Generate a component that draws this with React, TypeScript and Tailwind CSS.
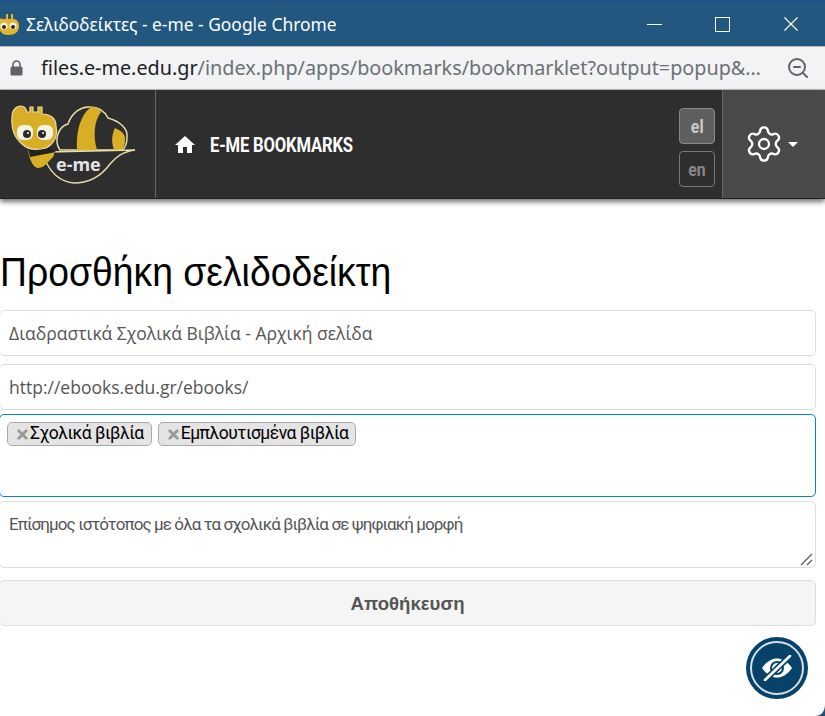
import { Settings, ZoomOut, X } from "lucide-react";

function BeeLogo() {
  return (
    <svg width="155" height="108" viewBox="0 0 155 108" className="block">
      {/* cloud */}
      <path d="M60 60 C54 52 57 37 68 34 C72 22 82 16 90 17 C99 17 105 22 108 28 C119 31 128 38 127 47 C127 53 125 58 122 60 Z" fill="#2e2e2e" stroke="#e8dca8" strokeWidth="1.5" />
      <path d="M77 60 C76 42 80 25 91 17 C96 17 100 19 101 22 C94 31 93 46 97 60 Z" fill="#d9ae25" />
      <path d="M114 60 C111 52 112 44 115 38 C122 41 126 45 125 50 C125 54 124 58 121 60 Z" fill="#d9ae25" />
      {/* leaf */}
      <path d="M48 62 L135 60 C122 62 116 67 110 74 C102 85 91 93 74 93 C62 92 52 84 46 72" fill="#2e2e2e" stroke="#e8dca8" strokeWidth="1.4" />
      {/* body */}
      <path d="M28 60 L52 60 C55 63 55 66 50 70 C46 75 42 78 38 78 C33 78 29 68 28 60 Z" fill="#d9ae25" />
      <path d="M28 58 L50 58 L56 62 L30 67 Z" fill="#222222" />
      {/* head */}
      <path d="M12 27 C12 20 16 16 21 16 C24 16 26 18 27 22 L30 22 L30 17 L33 17 L33 22 L38 22 L38 17 L42 17 L42 24 C50 24 56 28 56 36 C58 46 54 54 46 58 C38 60 28 60 22 54 C15 48 11 38 12 27 Z" fill="#d9ae25" stroke="#e8dca8" strokeWidth="1.2" />
      <rect x="17" y="35" width="16" height="15" rx="6" fill="#f5f2e6" />
      <rect x="37" y="35" width="16" height="15" rx="6" fill="#f5f2e6" />
      <circle cx="27" cy="44" r="4" fill="#2a2a2a" />
      <circle cx="42" cy="44" r="4" fill="#2a2a2a" />
      <circle cx="28" cy="43" r="1" fill="#fff" />
      <circle cx="43" cy="43" r="1" fill="#fff" />
      <text x="56" y="81" fill="#e4e4e4" fontSize="18" fontWeight="700" fontFamily="'Open Sans', sans-serif">e-me</text>
    </svg>
  );
}

function Favicon() {
  return (
    <svg width="19" height="22" viewBox="0 0 19 22">
      <path d="M-2 8 C-2 5 2 5 3 6 L6 6 L6 1 L8 1 L8 6 L11 6 L11 1 L13 1 L13 6 C17 6 19 9 19 13 C19 19 15 22 8 22 C1 22 -2 16 -2 8 Z" fill="#e3b52c" />
      <circle cx="4" cy="13" r="3.6" fill="#f7f3e0" />
      <circle cx="13" cy="13" r="3.6" fill="#f7f3e0" />
      <circle cx="4" cy="14" r="2" fill="#2a2a2a" />
      <circle cx="13" cy="14" r="2" fill="#2a2a2a" />
    </svg>
  );
}

function EyeSlash() {
  return (
    <svg width="32" height="26" viewBox="0 0 32 26">
      <path d="M1 13 C6 6 11 3.5 16 3.5 C21 3.5 26 6 31 13 C26 20 21 22.5 16 22.5 C11 22.5 6 20 1 13 Z" fill="#fff" />
      <circle cx="16" cy="13" r="6" fill="none" stroke="#07426b" strokeWidth="2" />
      <path d="M4 25 L29 1" stroke="#07426b" strokeWidth="6" />
      <path d="M4 25 L29 1" stroke="#fff" strokeWidth="2.6" strokeLinecap="round" />
    </svg>
  );
}

function Tag({ label }: { label: string }) {
  return (
    <span className="flex h-[24px] items-center rounded-[5px] border border-[#aaaaaa] bg-[#e4e4e4] pl-[7px] pr-[7px] text-[17.5px] leading-none tracking-[-0.5px] text-black">
      <X size={15} strokeWidth={4.5} className="text-[#999999]" />
      {label}
    </span>
  );
}

export default function App() {
  const inputClass = "block h-[46px] w-[817px] rounded-[5px] border border-[#dddddd] bg-white px-[9px] font-['Open_Sans',sans-serif] text-[17.5px] text-[#555555] outline-none";

  return (
    <div className="relative flex h-[716px] w-[825px] flex-col overflow-hidden bg-white font-['Roboto',sans-serif]">
      {/* window title bar */}
      <div className="flex h-[46px] shrink-0 items-center border-t-2 border-[#24508a] bg-[#22577f] text-white">
        <div className="flex h-full w-[26px] items-center overflow-hidden">
          <Favicon />
        </div>
        <span className="font-['Noto_Sans',sans-serif] text-[17.4px]">Σελιδοδείκτες - e-me - Google Chrome</span>
        <div className="ml-auto flex items-center">
          <div className="mr-[53px] h-px w-[15px] bg-white" />
          <div className="mr-[51px] h-[15px] w-[15px] border border-white" />
          <X size={20} strokeWidth={1.1} className="mr-[24px] scale-125" />
        </div>
      </div>

      {/* address bar */}
      <div className="flex h-[44px] shrink-0 items-center border-y border-[#b9bbbe] bg-[#f1f3f4] pl-[10px]">
        <svg width="13" height="16" viewBox="0 0 13 16" className="mr-[18px]">
          <path d="M3 7 V4.5 A3.5 3.5 0 0 1 10 4.5 V7" fill="none" stroke="#5f6368" strokeWidth="1.6" />
          <rect x="0.5" y="6.5" width="12" height="9" rx="1.5" fill="#5f6368" />
        </svg>
        <span className="font-['Noto_Sans',sans-serif] text-[19.8px] whitespace-nowrap text-[#202124]">
          files.e-me.edu.gr<span className="text-[#6b7075]">/index.php/apps/bookmarks/bookmarklet?output=popup&amp;…</span>
        </span>
        <ZoomOut size={24} strokeWidth={2} className="ml-auto mr-[15px] text-[#5f6368]" />
      </div>

      {/* nav */}
      <nav className="flex h-[109px] shrink-0 border-b border-[#222222] bg-[#2e2e2e] shadow-[0_3px_5px_rgba(0,0,0,0.55)]">
        <div className="w-[156px] border-r border-[#666666]">
          <BeeLogo />
        </div>
        <div className="flex items-center pl-[19px]">
          <svg width="20" height="18" viewBox="0 0 20 18" className="mr-[15px]">
            <path d="M10 1 L20 10 L17 10 L17 18 L12 18 L12 12 L8 12 L8 18 L3 18 L3 10 L0 10 Z" fill="#fff" />
          </svg>
          <span className="origin-left scale-x-[0.83] whitespace-nowrap pt-[1px] text-[20px] font-bold tracking-[-0.2px] text-white">E-ME BOOKMARKS</span>
        </div>
        <div className="ml-auto mr-[7px] flex flex-col gap-[7px] pt-[18px]">
          <div className="flex h-[36px] w-[36px] items-center justify-center rounded-[4px] border border-[#888888] bg-[#5f5f5f] text-[18px] font-bold text-[#cccccc]">
            <span className="scale-x-[0.88]">el</span>
          </div>
          <div className="flex h-[36px] w-[36px] items-center justify-center rounded-[4px] border border-[#777777] text-[18px] font-bold text-[#888888]">
            <span className="scale-x-[0.88]">en</span>
          </div>
        </div>
        <div className="flex w-[103px] items-center border-l border-[#666666] bg-[#4a4a4a] pl-[21px] text-white">
          <Settings size={40} strokeWidth={1.4} />
          <div className="ml-[4px] h-0 w-0 border-x-[5.5px] border-t-[5.5px] border-x-transparent border-t-white" />
        </div>
      </nav>

      {/* form */}
      <main className="relative flex flex-col pt-[51px]">
        <h1 className="mb-[15px] h-[45px] origin-left scale-x-[0.933] whitespace-nowrap font-['Liberation_Sans',sans-serif] text-[40px] leading-[45px] text-black">Προσθήκη σελιδοδείκτη</h1>
        <input readOnly value="Διαδραστικά Σχολικά Βιβλία - Αρχική σελίδα" className={`${inputClass} -ml-px`} />
        <input readOnly value="http://ebooks.edu.gr/ebooks/" className={`${inputClass} -ml-px mt-[8px]`} />
        <div className="-ml-px mt-[4px] flex h-[83px] w-[817px] items-start gap-[6px] rounded-[5px] border border-[#0087cc] bg-white pl-[7px] pt-[7px]">
          <Tag label="Σχολικά βιβλία" />
          <Tag label="Εμπλουτισμένα βιβλία" />
        </div>
        <div className="relative -ml-px mt-[4px] w-[817px]">
          <textarea
            readOnly
            value="Επίσημος ιστότοπος με όλα τα σχολικά βιβλία σε ψηφιακή μορφή"
            className="block h-[67px] w-[817px] resize-none rounded-[5px] border border-[#dddddd] bg-white px-[9px] py-[11px] text-[17px] leading-[22px] tracking-[-0.9px] text-[#555555] outline-none"
          />
          {/* resize grip */}
          <svg width="13" height="13" viewBox="0 0 13 13" className="absolute bottom-[2px] right-[3px]">
            <path d="M1 12 L12 1 M7 12 L12 7" stroke="#555555" strokeWidth="1.2" />
          </svg>
        </div>
        <button type="button" className="-ml-px mt-[12px] h-[46px] w-[817px] rounded-[5px] border border-[#dddddd] bg-[#f5f5f5] pt-[2px] font-['Liberation_Sans',sans-serif] text-[18.6px] font-bold text-[#555555]">
          Αποθήκευση
        </button>
      </main>

      {/* accessibility button */}
      <button type="button" className="absolute left-[746px] top-[637px] flex h-[62px] w-[62px] items-center justify-center rounded-full bg-[#07426b]">
        <span className="flex h-[54px] w-[54px] items-center justify-center rounded-full border-2 border-[#d5dfe6]">
          <EyeSlash />
        </span>
      </button>

      {/* window corner */}
      <svg width="10" height="12" viewBox="0 0 10 12" className="absolute bottom-0 right-0">
        <path d="M10 0 V12 H0 C6 12 10 8 10 0 Z" fill="#1f5079" />
      </svg>
    </div>
  );
}
